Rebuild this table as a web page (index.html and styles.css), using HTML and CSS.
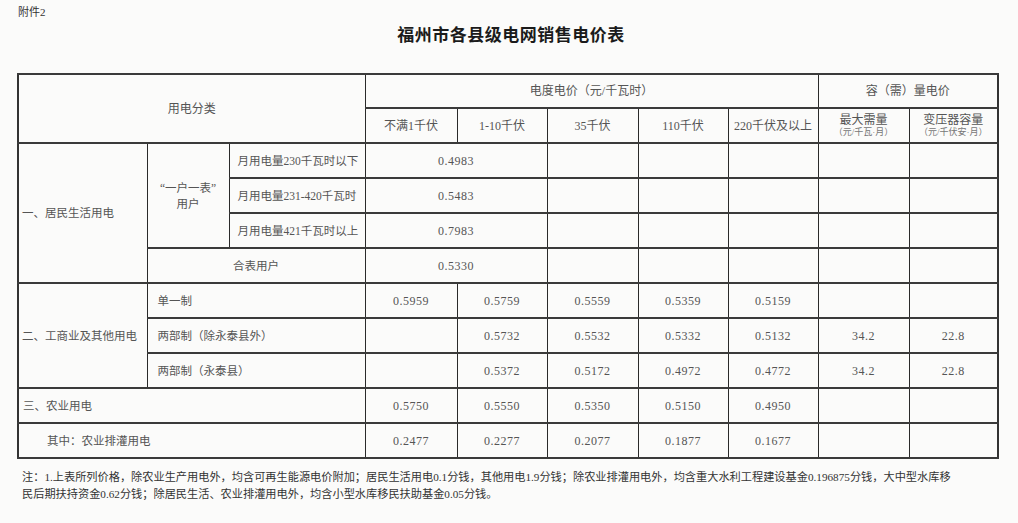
FILE: index.html
```html
<!DOCTYPE html>
<html lang="zh-CN">
<head>
<meta charset="utf-8">
<title>福州市各县级电网销售电价表</title>
<link rel="stylesheet" href="styles.css">
</head>
<body>
<div class="attach">附件2</div>
<h1 class="title">福州市各县级电网销售电价表</h1>
<table class="price">
  <colgroup>
    <col class="c1"><col class="c2"><col class="c3">
    <col class="v1"><col class="v2"><col class="v3"><col class="v4"><col class="v5">
    <col class="d1"><col class="d2">
  </colgroup>
  <tr class="hr1">
    <th colspan="3" rowspan="2">用电分类</th>
    <th colspan="5">电度电价（元/千瓦时）</th>
    <th colspan="2">容（需）量电价</th>
  </tr>
  <tr class="hr2">
    <th>不满1千伏</th>
    <th>1-10千伏</th>
    <th>35千伏</th>
    <th>110千伏</th>
    <th>220千伏及以上</th>
    <th class="two">最大需量<small>（元/千瓦·月）</small></th>
    <th class="two">变压器容量<small>（元/千伏安·月）</small></th>
  </tr>
  <tr>
    <td rowspan="4" class="cat">一、居民生活用电</td>
    <td rowspan="3" class="sub">“一户一表”<br>用户</td>
    <td class="lbl">月用电量230千瓦时以下</td>
    <td colspan="2" class="num">0.4983</td><td></td><td></td><td></td><td></td><td></td>
  </tr>
  <tr>
    <td class="lbl">月用电量231-420千瓦时</td>
    <td colspan="2" class="num">0.5483</td><td></td><td></td><td></td><td></td><td></td>
  </tr>
  <tr>
    <td class="lbl">月用电量421千瓦时以上</td>
    <td colspan="2" class="num">0.7983</td><td></td><td></td><td></td><td></td><td></td>
  </tr>
  <tr>
    <td colspan="2">合表用户</td>
    <td colspan="2" class="num">0.5330</td><td></td><td></td><td></td><td></td><td></td>
  </tr>
  <tr>
    <td rowspan="3" class="cat">二、工商业及其他用电</td>
    <td colspan="2" class="lbl2">单一制</td>
    <td class="num">0.5959</td><td class="num">0.5759</td><td class="num">0.5559</td><td class="num">0.5359</td><td class="num">0.5159</td><td></td><td></td>
  </tr>
  <tr>
    <td colspan="2" class="lbl2">两部制（除永泰县外）</td>
    <td></td><td class="num">0.5732</td><td class="num">0.5532</td><td class="num">0.5332</td><td class="num">0.5132</td><td class="num">34.2</td><td class="num">22.8</td>
  </tr>
  <tr>
    <td colspan="2" class="lbl2">两部制（永泰县）</td>
    <td></td><td class="num">0.5372</td><td class="num">0.5172</td><td class="num">0.4972</td><td class="num">0.4772</td><td class="num">34.2</td><td class="num">22.8</td>
  </tr>
  <tr>
    <td colspan="3" class="cat2">三、农业用电</td>
    <td class="num">0.5750</td><td class="num">0.5550</td><td class="num">0.5350</td><td class="num">0.5150</td><td class="num">0.4950</td><td></td><td></td>
  </tr>
  <tr>
    <td colspan="3" class="ind">其中：农业排灌用电</td>
    <td class="num">0.2477</td><td class="num">0.2277</td><td class="num">0.2077</td><td class="num">0.1877</td><td class="num">0.1677</td><td></td><td></td>
  </tr>
</table>
<p class="note">注：1.上表所列价格，除农业生产用电外，均含可再生能源电价附加；居民生活用电0.1分钱，其他用电1.9分钱；除农业排灌用电外，均含重大水利工程建设基金0.196875分钱，大中型水库移<br>民后期扶持资金0.62分钱；除居民生活、农业排灌用电外，均含小型水库移民扶助基金0.05分钱。</p>
</body>
</html>
```

FILE: styles.css
```css
html, body {
  margin: 0;
  padding: 0;
  background: #fbfbfa;
}

body {
  width: 1018px;
  font-family: "Liberation Serif", "Noto Sans CJK SC", serif;
  color: #444;
}

.attach {
  margin: 4px 0 0 18px;
  font-size: 11px;
  line-height: 16px;
  color: #333;
}

.title {
  margin: 2px 0 0;
  padding-left: 4px;
  text-align: center;
  font-family: "Noto Sans CJK SC", sans-serif;
  font-weight: 700;
  font-size: 17px;
  letter-spacing: 0.5px;
  line-height: 24px;
  color: #1b1b1b;
}

.price {
  margin: 27px 0 0 17px;
  width: 980px;
  table-layout: fixed;
  border-collapse: collapse;
  border: 2px solid #333;
  font-size: 11.5px;
  color: #555;
}

.c1 { width: 129px; }
.c2 { width: 82px; }
.c3 { width: 136px; }
.v1 { width: 92px; }
.v2 { width: 90px; }
.v3 { width: 91px; }
.v4 { width: 90px; }
.v5 { width: 90px; }
.d1 { width: 91px; }
.d2 { width: 89px; }

.price th,
.price td {
  border-left: 1px solid #2a2a2a;
  border-right: 1px solid #2a2a2a;
  border-top: 2px solid #3a3a3a;
  border-bottom: 2px solid #3a3a3a;
  padding: 0;
  text-align: center;
  vertical-align: middle;
  font-weight: 400;
  line-height: 16px;
  white-space: nowrap;
}

.price th { font-size: 12px; }

.price tr { height: 35px; }
.price .hr1 { height: 34px; }

.price .two { line-height: 14px; }

.price small {
  display: block;
  font-size: 9px;
  line-height: 11px;
  color: #777;
}

.price .num {
  font-size: 12px;
  letter-spacing: 0.5px;
}

.price .cat { text-align: left; padding-left: 3px; }
.price .cat2 { text-align: left; padding-left: 4px; }
.price .ind { text-align: left; padding-left: 28px; }
.price .lbl { text-align: left; padding-left: 8px; }
.price .lbl2 { text-align: left; padding-left: 10px; }
.price .sub { line-height: 16px; }

.note {
  margin: 10px 0 0 22px;
  font-size: 11.2px;
  line-height: 17px;
  color: #333;
  white-space: nowrap;
}
```
